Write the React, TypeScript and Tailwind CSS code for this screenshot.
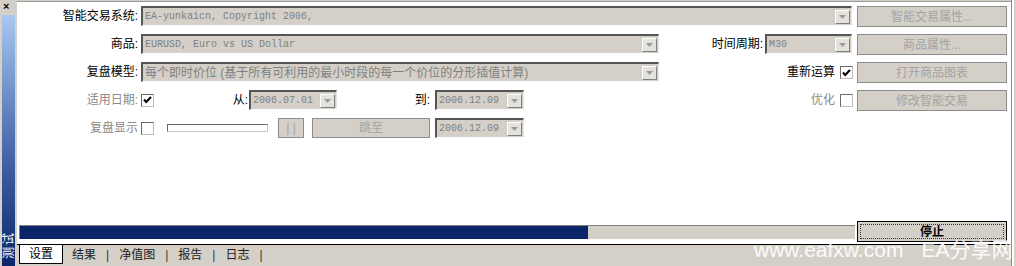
import React from 'react';

const cjk = "font-['Liberation_Sans','Noto_Sans_CJK_SC',sans-serif]";
const mono = "font-['Liberation_Mono','Noto_Sans_CJK_SC',monospace]";

const DropArrow: React.FC = () => (
  <div className="ml-auto mr-[1px] w-[15px] h-[14px] bg-[#e4e2dc] border border-t-white border-l-white border-b-[#808080] border-r-[#808080] flex items-center justify-center shrink-0">
    <svg width="7" height="4" viewBox="0 0 7 4">
      <path d="M0 0h7L3.5 4z" fill="#9a9a9a" />
    </svg>
  </div>
);

const Combo: React.FC<{ w: string; text: string; cn?: boolean }> = ({ w, text, cn }) => (
  <div
    className={`${w} h-[20px] shrink-0 flex items-center bg-[#d4d0c8] border-t-2 border-l-2 border-t-[#555] border-l-[#555] border-b border-r border-b-white border-r-[#e8e6e0] pl-[2px] overflow-hidden`}
  >
    <span
      className={`${cn ? `${cjk} text-[12px]` : `${mono} text-[10px]`} text-[#808080] whitespace-nowrap leading-none`}
    >
      {text}
    </span>
    <DropArrow />
  </div>
);

const Btn: React.FC<{ w: string; label: string; className?: string }> = ({ w, label, className = '' }) => (
  <div
    className={`${w} h-[21px] shrink-0 bg-[#d4d0c8] border border-[#8c8c8c] flex items-center justify-center ${cjk} text-[12px] text-[#a3a3a3] whitespace-nowrap ${className}`}
  >
    {label}
  </div>
);

const Check: React.FC<{ on?: boolean }> = ({ on }) => (
  <div className="w-[13px] h-[13px] shrink-0 bg-white border border-t-[#6a6a6a] border-l-[#6a6a6a] border-b-[#bdbdbd] border-r-[#bdbdbd] flex items-center justify-center">
    {on && (
      <svg width="9" height="8" viewBox="0 0 9 8">
        <path d="M1 3.5 3.2 6 8 1" stroke="#000" strokeWidth="2" fill="none" />
      </svg>
    )}
  </div>
);

const Label: React.FC<{ w: string; text: string; gray?: boolean }> = ({ w, text, gray }) => (
  <div
    className={`${w} shrink-0 h-[20px] flex items-center justify-end ${cjk} text-[12px] whitespace-nowrap ${
      gray ? 'text-[#8a8a8a]' : 'text-black'
    }`}
  >
    {text}
  </div>
);

const tabs = ['结果', '净值图', '报告', '日志'];

export default function App() {
  return (
    <div className="relative flex w-[1016px] h-[266px] bg-[#d4d0c8] overflow-hidden">
      {/* Left dock strip */}
      <div className="w-[17px] shrink-0 flex flex-col">
        <div className="h-[15px] flex items-start pl-[3px] pt-[1px] text-[11px] font-bold leading-none text-black font-['Liberation_Sans',sans-serif]">
          ×
        </div>
        <div className="flex-1 ml-[2px] mr-[2px] bg-linear-to-b from-[#a9c8f0] via-[#4f6fb0] to-[#0c256b] flex flex-col justify-end">
          <div className="h-[38px] w-[13px] mb-[2px] flex items-center justify-center">
            <span className={`${cjk} text-[12px] text-white leading-none whitespace-nowrap tracking-[2px] -rotate-90`}>
              测试
            </span>
          </div>
        </div>
      </div>

      {/* Main pane */}
      <div className="w-[995px] shrink-0 flex flex-col border-r border-[#8c8c8c]">
        <div className="h-[243px] bg-white border-t border-[#9a9a9a] mt-[1px] pt-[4px] flex flex-col">
          {/* Row 1 */}
          <div className="flex items-start h-[21px]">
            <Label w="w-[121px]" text="智能交易系统:" />
            <div className="ml-[3px] flex">
              <Combo w="w-[711px]" text="EA-yunkaicn, Copyright 2006," />
            </div>
            <Btn w="w-[150px]" label="智能交易属性..." className="ml-[5px]" />
          </div>
          {/* Row 2 */}
          <div className="flex items-start h-[21px] mt-[7px]">
            <Label w="w-[121px]" text="商品:" />
            <div className="ml-[3px] flex">
              <Combo w="w-[518px]" text="EURUSD, Euro vs US Dollar" />
            </div>
            <Label w="w-[104px]" text="时间周期:" />
            <div className="ml-[2px] flex">
              <Combo w="w-[87px]" text="M30" />
            </div>
            <Btn w="w-[150px]" label="商品属性..." className="ml-[5px]" />
          </div>
          {/* Row 3 */}
          <div className="flex items-start h-[21px] mt-[7px]">
            <Label w="w-[121px]" text="复盘模型:" />
            <div className="ml-[3px] flex">
              <Combo w="w-[518px]" text="每个即时价位 (基于所有可利用的最小时段的每一个价位的分形插值计算)" cn />
            </div>
            <Label w="w-[176px]" text="重新运算" />
            <div className="ml-[5px] h-[21px] flex items-center">
              <Check on />
            </div>
            <Btn w="w-[150px]" label="打开商品图表" className="ml-[4px]" />
          </div>
          {/* Row 4 */}
          <div className="flex items-start h-[21px] mt-[7px]">
            <Label w="w-[121px]" text="适用日期:" gray />
            <div className="ml-[3px] h-[20px] flex items-center">
              <Check on />
            </div>
            <Label w="w-[94px]" text="从:" />
            <div className="ml-[1px] flex">
              <Combo w="w-[88px]" text="2006.07.01" />
            </div>
            <Label w="w-[93px]" text="到:" />
            <div className="ml-[5px] flex">
              <Combo w="w-[89px]" text="2006.12.09" />
            </div>
            <Label w="w-[311px]" text="优化" gray />
            <div className="ml-[5px] h-[21px] flex items-center">
              <Check />
            </div>
            <Btn w="w-[150px]" label="修改智能交易" className="ml-[4px]" />
          </div>
          {/* Row 5 */}
          <div className="flex items-start h-[21px] mt-[7px]">
            <Label w="w-[121px]" text="复盘显示" gray />
            <div className="ml-[3px] h-[20px] flex items-center">
              <Check />
            </div>
            <div className="ml-[13px] h-[20px] flex items-center">
              <div className="w-[101px] h-[8px] bg-white border border-t-[#6a6a6a] border-l-[#6a6a6a] border-b-[#c8c8c8] border-r-[#c8c8c8]" />
            </div>
            <Btn w="w-[26px]" label="| |" className="ml-[10px] !h-[20px]" />
            <Btn w="w-[118px]" label="跳至" className="ml-[8px] !h-[20px]" />
            <div className="ml-[5px] flex">
              <Combo w="w-[89px]" text="2006.12.09" />
            </div>
          </div>

          {/* Progress + stop */}
          <div className="mt-auto mb-[2px] flex items-start h-[21px]">
            <div className="ml-[2px] mt-[4px] w-[836px] h-[14px] bg-[#d4d0c8] border-t border-l border-[#808080] flex">
              <div className="w-[568px] h-full bg-[#0a246a]" />
            </div>
            <div className="ml-[2px] w-[150px] h-[21px] bg-[#d4d0c8] border border-black p-[2px]">
              <div
                className={`w-full h-full border border-dotted border-[#333] flex items-center justify-center ${cjk} text-[12px] font-bold text-black`}
              >
                停止
              </div>
            </div>
          </div>
        </div>

        {/* Bottom tabs */}
        <div className="flex-1 border-t border-black flex items-start">
          <div
            className={`ml-[2px] w-[44px] h-[19px] bg-white border-l border-r border-b border-black flex items-center justify-center ${cjk} text-[12px] text-black`}
          >
            设置
          </div>
          <div className={`flex items-center h-[19px] ml-[9px] ${cjk} text-[12px] text-[#222]`}>
            {tabs.map((t) => (
              <React.Fragment key={t}>
                <span>{t}</span>
                <span className="mx-[10px] text-[#333]">|</span>
              </React.Fragment>
            ))}
          </div>
        </div>
      </div>
      <div className="w-[4px] shrink-0 bg-white border-r-2 border-[#d4d0c8]" />

      {/* Watermark */}
      <div className="absolute left-[754px] top-[239px] flex items-center whitespace-nowrap text-white/90">
        <span className="font-['Liberation_Sans',sans-serif] text-[21px] leading-none">www.eafxw.com</span>
        <span className={`${cjk} ml-[18px] text-[21px] leading-none`}>EA分享网</span>
      </div>
    </div>
  );
}
